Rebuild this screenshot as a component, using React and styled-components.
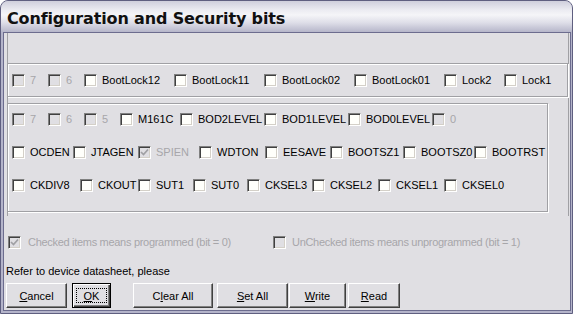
import React from 'react';
import styled, { createGlobalStyle } from 'styled-components';

const Global = createGlobalStyle`
  html, body { margin: 0; padding: 0; background: #ffffff; }
  body { font-family: "Liberation Sans", Arial, sans-serif; font-size: 11px; color: #000; }
`;

const Window = styled.div`
  width: 573px;
  height: 314px;
  box-sizing: border-box;
  border: 1px solid #5f5f80;
  border-radius: 8px 8px 0 0;
  background: #b4b4ca;
  display: flex;
  flex-direction: column;
  overflow: hidden;
`;

const TitleBar = styled.div`
  flex: 0 0 31px;
  box-sizing: border-box;
  padding: 5px 0 0 6px;
  background: linear-gradient(#cfcfdc 0%, #ececf2 30%, #f5f5f8 45%, #dedee8 70%, #b6b6ca 100%);
  font: bold 16px/26px "DejaVu Sans", Verdana, sans-serif;
  letter-spacing: -0.15px;
  color: #111;
`;

const Frame = styled.div`
  flex: 1;
  display: flex;
  padding: 0 2px 2px;
`;

const Client = styled.div`
  flex: 1;
  display: flex;
  flex-direction: column;
  border: 1px solid #6c6c8e;
  background: #e0dfe3;
`;

const Panel = styled.div`
  margin: 0 1px 0 3px;
  padding: 30px 0 4px;
  border-left: 1px solid #a0a0a4;
  border-right: 1px solid #a0a0a4;
  display: flex;
  flex-direction: column;
  gap: 6px;
`;

const Group = styled.div`
  box-sizing: border-box;
  width: ${p => p.$w}px;
  margin-left: -1px;
  padding: ${p => p.$pad};
  border: 1px solid #a0a0a4;
  box-shadow: inset 1px 1px 0 #fff, 1px 1px 0 #fff;
  display: flex;
  flex-direction: column;
  gap: 20px;
`;

const Row = styled.div`
  display: flex;
  height: 13px;
  align-items: center;
`;

const Item = styled.div`
  display: flex;
  align-items: center;
  gap: ${p => p.$gap || 5}px;
  flex: ${p => (p.$w ? `0 0 ${p.$w}px` : '1')};
  white-space: nowrap;
`;

const Box = styled.span`
  flex: none;
  width: 13px;
  height: 13px;
  box-sizing: border-box;
  border: 1px solid;
  border-color: #808080 #fff #fff #808080;
  box-shadow: inset 1px 1px 0 #404040, inset -1px -1px 0 #d4d0c8;
  background: ${p => (p.$off ? '#e0dfe3' : '#fffffb')};
  display: flex;
  align-items: center;
  justify-content: center;
`;

const Label = styled.span`
  line-height: 13px;
  color: ${p => (p.$off ? '#a7a6aa' : '#000')};
  letter-spacing: ${p => p.$tight ? '-0.3px' : '0'};
`;

const Legend = styled.div`
  display: flex;
  height: 13px;
  align-items: center;
  margin-top: 20px;
  padding-left: 4px;
`;

const Note = styled.div`
  margin-top: 16px;
  padding-left: 2px;
  line-height: 13px;
`;

const Buttons = styled.div`
  display: flex;
  margin-top: 5px;
  padding-left: 2px;
`;

const Button = styled.button`
  width: ${p => p.$w}px;
  height: 25px;
  margin-left: ${p => p.$ml || 0}px;
  padding: 0;
  box-sizing: border-box;
  background: #e0dfe3;
  font-family: "Liberation Sans", Arial, sans-serif;
  font-size: 11px;
  color: #000;
  display: flex;
  align-items: center;
  justify-content: center;
  border: 1px solid;
  border-color: ${p => (p.$default ? '#000' : '#fff #404040 #404040 #fff')};
  box-shadow: ${p =>
    p.$default
      ? 'inset 1px 1px 0 #fff, inset -1px -1px 0 #404040, inset -2px -2px 0 #808080'
      : 'inset -1px -1px 0 #808080'};
`;

const Focus = styled.span`
  box-sizing: border-box;
  width: 31px;
  height: 15px;
  border: 1px dotted #000;
  display: flex;
  align-items: center;
  justify-content: center;
`;

function Check({ label, w, off, checked, gap, tight }) {
  return (
    <Item $w={w} $gap={gap}>
      <Box $off={off}>
        {checked && (
          <svg width="9" height="9" viewBox="0 0 9 9">
            <polyline points="1,4 3.5,6.5 8,1.5" fill="none" stroke={off ? '#a0a0a4' : '#000'} strokeWidth="1.7" />
          </svg>
        )}
      </Box>
      <Label $off={off} $tight={tight}>{label}</Label>
    </Item>
  );
}

const lockBits = [
  ['7', 36, true], ['6', 36, true], ['BootLock12', 90], ['BootLock11', 90],
  ['BootLock02', 90], ['BootLock01', 90], ['Lock2', 60], ['Lock1'],
];

const fuseRows = [
  [['7', 36, true], ['6', 36, true], ['5', 36, true], ['M161C', 60], ['BOD2LEVEL', 84],
    ['BOD1LEVEL', 84], ['BOD0LEVEL', 84], ['0', 0, true]],
  [['OCDEN', 61], ['JTAGEN', 65], ['SPIEN', 61, true, true], ['WDTON', 66], ['EESAVE', 65],
    ['BOOTSZ1', 73], ['BOOTSZ0', 71], ['BOOTRST']],
  [['CKDIV8', 68], ['CKOUT', 58], ['SUT1', 55], ['SUT0', 54], ['CKSEL3', 65],
    ['CKSEL2', 66], ['CKSEL1', 66], ['CKSEL0']],
];

export default function App() {
  return (
    <>
      <Global />
      <Window>
        <TitleBar>Configuration and Security bits</TitleBar>
        <Frame>
          <Client>
            <Panel>
              <Group $w={561} $pad="10px 0 9px 4px">
                <Row>
                  {lockBits.map(([l, w, off]) => <Check key={l + w} label={l} w={w} off={off} />)}
                </Row>
              </Group>
              <Group $w={541} $pad="9px 0 19px 4px">
                {fuseRows.map((row, i) => (
                  <Row key={i}>
                    {row.map(([l, w, off, checked]) => (
                      <Check key={l} label={l} w={w || undefined} off={off} checked={checked} />
                    ))}
                  </Row>
                ))}
              </Group>
            </Panel>
            <Legend>
              <Check label="Checked items means programmed (bit = 0)" w={265} off checked gap={7} tight />
              <Check label="UnChecked items means unprogrammed (bit = 1)" off gap={6} tight />
            </Legend>
            <Note>Refer to device datasheet, please</Note>
            <Buttons>
              <Button $w={61}><span><u>C</u>ancel</span></Button>
              <Button $w={39} $ml={5} $default><Focus><u>O</u>K</Focus></Button>
              <Button $w={80} $ml={22}><span>C<u>l</u>ear All</span></Button>
              <Button $w={71} $ml={4}><span><u>S</u>et All</span></Button>
              <Button $w={57} $ml={1}><span><u>W</u>rite</span></Button>
              <Button $w={52} $ml={2}><span><u>R</u>ead</span></Button>
            </Buttons>
          </Client>
        </Frame>
      </Window>
    </>
  );
}
